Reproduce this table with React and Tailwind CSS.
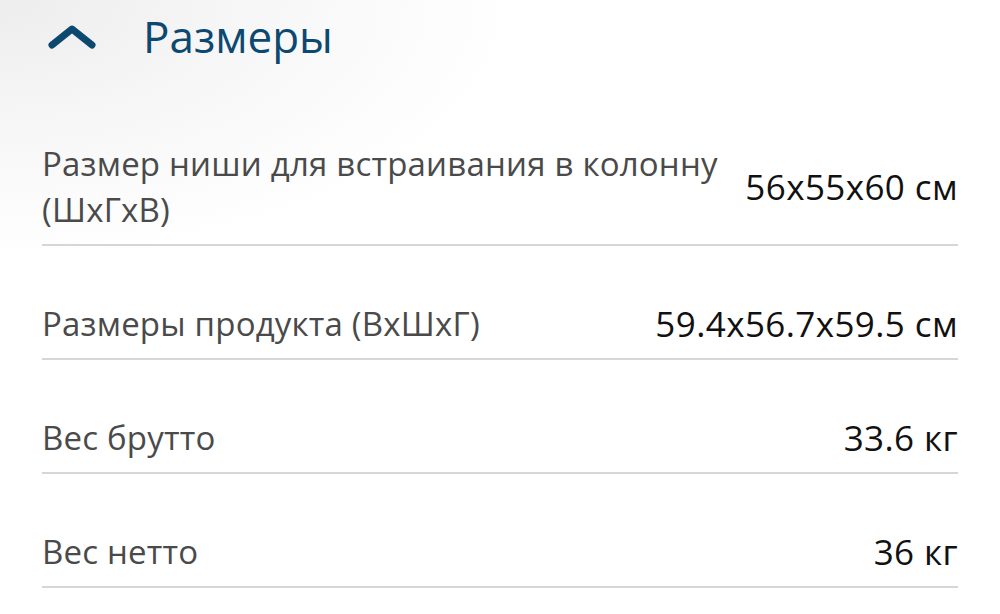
import React from "react";

const rows = [
  { label: ["Размер ниши для встраивания в колонну", "(ШхГхВ)"], value: "56x55x60 см" },
  { label: ["Размеры продукта (ВхШхГ)"], value: "59.4x56.7x59.5 см" },
  { label: ["Вес брутто"], value: "33.6 кг" },
  { label: ["Вес нетто"], value: "36 кг" },
];

export default function App() {
  return (
    <div className="w-[1000px] h-[614px] overflow-hidden bg-[radial-gradient(ellipse_520px_260px_at_0%_0%,#ededed_0%,#f6f6f6_45%,#ffffff_100%)] font-['Open_Sans',sans-serif]">
      <div className="flex items-center h-[72px] pl-[48px]">
        <svg width="48" height="24" viewBox="0 0 48 24" className="mt-[2px]">
          <path d="M4 20 L24 4 L44 20" fill="none" stroke="#0c4870" strokeWidth="7" strokeLinecap="round" strokeLinejoin="round" />
        </svg>
        <h2 className="ml-[47px] text-[44px] leading-none text-[#0c4870]">Размеры</h2>
      </div>
      <div className="px-[42px] pt-[69px]">
        {rows.map((r, i) => (
          <div key={i} className={`flex items-center justify-between border-b-2 border-[#d6d6d6] pb-[11px] ${i === 0 ? "" : "pt-[55px]"}`}>
            <div className="text-[33px] leading-[46px] text-[#4a4a4a] tracking-[0.2px]">
              {r.label.map((l, j) => (
                <div key={j}>{l}</div>
              ))}
            </div>
            <div className="text-[35px] leading-[46px] text-[#111111] whitespace-nowrap tracking-[0.4px]">{r.value}</div>
          </div>
        ))}
      </div>
    </div>
  );
}
